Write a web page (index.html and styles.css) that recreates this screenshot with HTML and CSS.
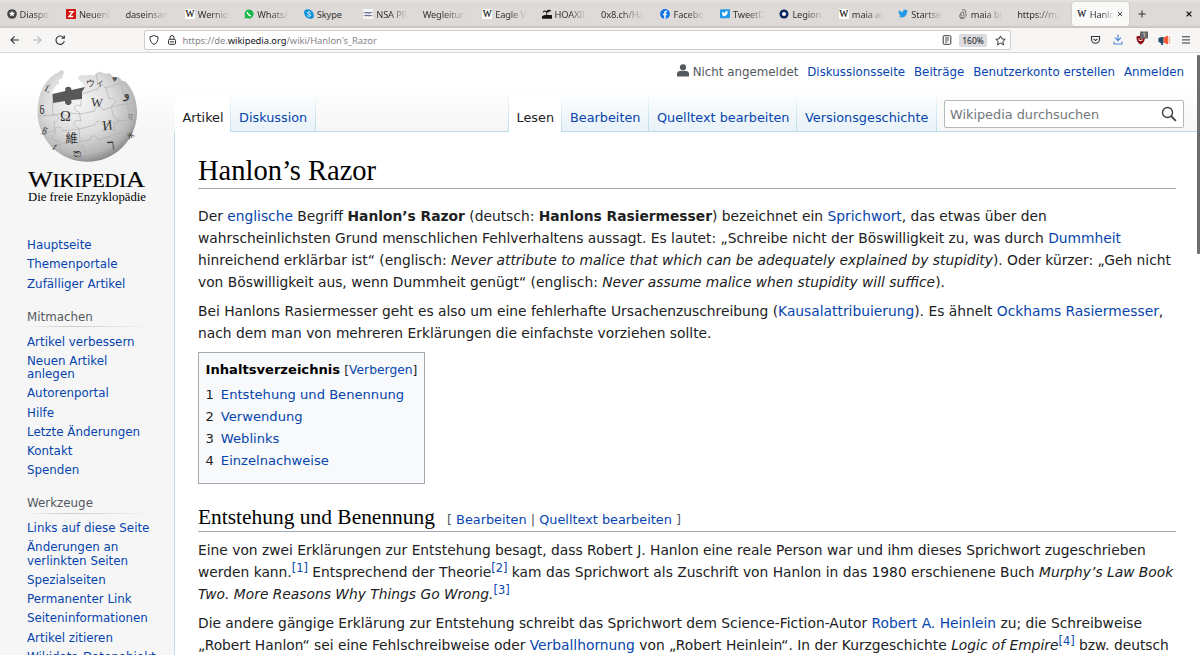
FILE: index.html
```html
<!DOCTYPE html>
<html lang="de">
<head>
<meta charset="utf-8">
<title>Hanlon’s Razor – Wikipedia</title>
<link rel="stylesheet" href="styles.css">
</head>
<body>
<div class="tabs">
  <div class="tab"><svg class="fav" viewBox="0 0 10 10"><circle cx="5" cy="5" r="4.800" fill="#444"/><path d="M5 1.500l.9 2.200 2.400.1-1.900 1.500.7 2.300L5 6.300 2.900 7.600l.7-2.300-1.900-1.500 2.400-.1z" fill="#fff"/></svg><span class="tt">Diaspor</span></div>
  <div class="tab"><svg class="fav" viewBox="0 0 10 10"><path fill="#d3170e" d="M0 0h10v10H0z"/><path d="M3 2.600h4L3 7.500h4.200" fill="none" stroke="#fff" stroke-width="1.400"/></svg><span class="tt">Neuenb</span></div>
  <div class="tab"><span class="tt">daseinsana</span></div>
  <div class="tab"><span class="fav w">W</span><span class="tt">Wernick</span></div>
  <div class="tab"><svg class="fav" viewBox="0 0 10 10"><path fill="#18b84b" d="M5 .5a4.500 4.500 0 1 1-2.100 8.400L.4 9.600l.7-2.500A4.500 4.500 0 0 1 5 .5z"/><path d="M3.300 3c.2 2 1.500 3.500 3.600 3.900" fill="none" stroke="#fff" stroke-width="1.300"/></svg><span class="tt">WhatsA</span></div>
  <div class="tab"><svg class="fav" viewBox="0 0 10 10"><circle cx="3.400" cy="3.400" r="3.200" fill="#0a93e0"/><circle cx="6.600" cy="6.600" r="3.200" fill="#0a7fd8"/><circle cx="5" cy="5" r="4.300" fill="#0a93e0"/><path d="M6.700 3.500C5.700 2.400 3.500 2.700 3.500 3.900S6.600 4.900 6.600 6.200 4.100 7.700 3.200 6.400" fill="none" stroke="#fff" stroke-width="1"/></svg><span class="tt full">Skype</span></div>
  <div class="tab"><svg class="fav" viewBox="0 0 10 10"><path fill="#f4f4f6" d="M0 0h10v10H0z"/><path d="M.5 3.500h9M.5 6.600h9" stroke="#9295ae"/><path d="M2 4.500l2-1 2 1 2-1M2 7l2-1 2 1 2-1" stroke="#444a75" stroke-width=".7" fill="none"/></svg><span class="tt">NSA PR</span></div>
  <div class="tab"><span class="tt">Wegleitung</span></div>
  <div class="tab"><span class="fav w">W</span><span class="tt">Eagle V</span></div>
  <div class="tab"><svg class="fav" viewBox="0 0 10 10"><path d="M0 7l3-1h7v3.800H0zM4.300 6.500V3.500C3 2 1.500 3 .8 4 .8 1.500 3 1 4.500 2.300 5.500.5 8.500.2 9.500 2.500 8 2 7.300 2.300 7 3.500 6.500 2.500 5.500 3 5.200 3.500v3z" fill="#161616"/></svg><span class="tt">HOAXIL</span></div>
  <div class="tab"><span class="tt">0x8.ch/Hac</span></div>
  <div class="tab"><svg class="fav" viewBox="0 0 10 10"><circle cx="5" cy="5" r="4.900" fill="#1374e8"/><path d="M4.200 9.800V6.300H2.900V4.800h1.300V3.600c0-1.300.8-2 2.800-1.700v1.300c-1 0-1.300.1-1.300.7v.9H7l-.3 1.500h-1v3.500z" fill="#fff"/></svg><span class="tt">Facebo</span></div>
  <div class="tab"><svg class="fav" viewBox="0 0 10 10"><rect y=".3" width="10" height="9" rx="1" fill="#2499ea"/><path d="M8.300 2.500l-.7.900C7.500 6.500 4 8 1.900 6.700c.7 0 1.200-.2 1.600-.5C2.400 6 1.900 5 2 2.500 3 3.500 3.800 3.800 4.900 3.900 4.800 2.300 6.300 1.700 7.200 2.600z" fill="#fff"/></svg><span class="tt">TweetD</span></div>
  <div class="tab"><svg class="fav" viewBox="0 0 10 10"><circle cx="5" cy="5" r="4.500" fill="#0b2a63"/><circle cx="5" cy="5" r="2" fill="#fff"/><path d="M2 1l2 1.500L2 4M8 9L6.500 7.500 8 6" fill="#0b2a63"/></svg><span class="tt">Legion:</span></div>
  <div class="tab"><span class="fav w">W</span><span class="tt">maia ars</span></div>
  <div class="tab"><svg class="fav" viewBox="0 0 10 10"><path d="M10 2l-1 1.100C8.900 7.500 4.500 10 .3 7.800c1.200 0 2-.3 2.800-.9-1-.1-1.600-.6-1.900-1.400h.9C1 5 .5 4.200.5 3.200l.9.300C.5 2.800.3 1.700.8.900c1.200 1.300 2.500 2 4.200 2.100C4.600.8 7.100-.2 8.300 1.200L9.600.7l-.8 1.400z" fill="#2499ea"/></svg><span class="tt">Startsei</span></div>
  <div class="tab"><svg class="fav" viewBox="0 0 10 10"><path d="M4 1.300C6-.2 8.500 1 7.500 3.500 9 6 7.500 9.300 4.500 9.300S1 7 2.300 5.500L3.500 3M4 3.300c2-1 2.500.7 1 1.500 2 .3 1.500 2.500-.5 2.200M3 7.500V5M2 9h4" fill="none" stroke="#675c57" stroke-width=".9"/></svg><span class="tt">maia blo</span></div>
  <div class="tab"><span class="tt">https://mai</span></div>
  <div class="tab active"><span class="fav w">W</span><span class="tt">Hanlo</span><svg class="x" viewBox="0 0 6 6"><path d="M.8.8l4.400 4.400M5.200.8L.8 5.200" stroke="#333" stroke-width=".9"/></svg></div>
  <svg class="plus" viewBox="0 0 8 8"><path d="M4 .5v7M.5 4h7" stroke="#333"/></svg>
  <svg class="close" viewBox="0 0 6 6"><path d="M.6.6l4.800 4.800M5.400.6L.6 5.400" stroke="#111" stroke-width="1.300"/></svg>
</div>
<div class="toolbar">
  <svg class="nav" viewBox="0 0 70 20" fill="none" stroke="#333" stroke-width="1.100"><path d="M19 10H11m3.600-3.700L11 10l3.600 3.700"/><path d="M33 10h8m-3.600-3.700L41 10l-3.600 3.700" stroke="#b8b8b8"/><path d="M63.500 7.600A4.200 4.200 0 1 0 64.300 11M64.300 5.500V8.300H61.500"/></svg>
  <div class="url">
    <svg class="i10" viewBox="0 0 10 10"><path d="M5 .6L9 1.800c.2 3.700-1 6.200-4 7.700C2 8 .8 5.500 1 1.800z" fill="none" stroke="#333"/></svg>
    <svg class="i10 lock" viewBox="0 0 10 10" fill="none" stroke="#333"><rect x="1.500" y="4.300" width="7" height="5" rx="1"/><path d="M3 4.300V2.500a2 2 0 0 1 4 0v1.800M3 6.800h4"/></svg>
    <span class="addr">https://de.<b>wikipedia.org</b>/wiki/Hanlon's_Razor</span>
    <svg class="i10 reader" viewBox="0 0 10 10" fill="none" stroke="#333"><rect x="1.200" y=".7" width="7.600" height="8.600" rx="1"/><path d="M3 3h4M3 5h4M3 7h2.500" stroke-width=".9"/></svg>
    <span class="zoom">160%</span>
    <svg class="star" viewBox="0 0 11 11"><path d="M5.500.9l1.400 3 3.300.4-2.400 2.200.7 3.300-3-1.700-3 1.700.7-3.300L.8 4.300l3.300-.4z" fill="none" stroke="#333"/></svg>
  </div>
  <svg class="ext" viewBox="0 0 102 20" fill="none"><path d="M2.500 6.500h8v2.800a4 4 0 0 1-8 0zM4.600 8.800l1.900 1.800 1.900-1.800" stroke="#333" stroke-width="1.100"/><path d="M29 4.500v6m-3-2.800l3 3 3-3M25 11.500V14h8v-2.500" stroke="#4a86d8" stroke-width="1.100"/><path d="M47.500 6.500l4.200-1 4.200 1c.2 4-1.200 6.500-4.200 8-3-1.500-4.400-4-4.200-8z" fill="#8d0710"/><path d="M50 8v2.500h3V8" stroke="#fff" stroke-width=".8"/><rect x="51" y="1.500" width="8" height="7" fill="#666"/><text x="53.400" y="7.300" class="badge">1</text><path d="M69.500 8l3-1h2v6h-2l-3-1z" fill="#1f4967"/><path d="M74.500 7.500L79 5.500v9l-4.500-2z" fill="#ef5c38"/><path d="M71.300 12l1.200 3h1.700l-.7-3" fill="#1f4967"/><path d="M79.500 8l1.500-1m-1.500 3h1.800m-1.800 2l1.500 1" stroke="#ef5c38"/><path d="M93 6.800h8M93 9.900h8M93 13h8" stroke="#333"/></svg>
</div>
<div class="page">
  <aside class="side">
    <svg class="logo" viewBox="0 0 120 152">
      <defs><radialGradient id="g" cx=".42" cy=".36" r=".66"><stop offset="0" stop-color="#f5f5f5"/><stop offset=".5" stop-color="#dedede"/><stop offset=".85" stop-color="#b5b5b5"/><stop offset="1" stop-color="#858585"/></radialGradient></defs>
      <path d="M36 6.500c-3-.5-4 2-8 3.500C17 17 10.500 31 10.500 48a49.500 49.500 0 0 0 99.500 0c0-13-5-24-12-31-2 1-4-1-5-3l-4-1c-3 1-5-2-6-4-4 2-8-1-12-1.500-1 3-5 5-8 3-3 1-5 1-7 .500-5 0-6 3-3.500 5l3 3 2 4-2 5-30 2-1-2 5-7c3 0 3-3 2-5 4-1 5-3 4-5 2-1 2-3 .5-4.500z" fill="url(#g)"/>
      <path d="M25.500 30l13-3c-2-5 6-6 6-1l13.500-3-3 5v7l-11 1c3 6-7 7-6 1l-12 2z" fill="#585858"/>
      <g fill="none" stroke="#b0b0b0" stroke-width=".7"><path d="M25 38l1 14c6-4 8 5 1 6l1 12c-5 3-3 8 3 6l4 14M54 36v6c-8-3-9 4-2 6l2 9c-9-3-9 6-2 7l1 12c-5 3-2 8 3 5l4 15M55 30l16-5c1-5 6-6 7-1l16-5M79 24l3 11c7-3 8 5 2 7l3 12c7-1 6 7 0 6l1 13M11 52l15-1 10-2c1 4 6 4 6 0l12 1 14-3c-1-5 6-7 8-1l15-5 18-2M13 70l15-3c-1-5 7-6 8 0l16-2 16-4c0-5 6-5 8 0l15-4 17-2M23 83l15-4c2-5 8-4 8 0l17-3c0-5 7-6 8 0l19-6 9-2M69 9l2 11M94 19l3 12c7-2 7 5 3 7l3 15"/></g>
      <g fill="#333" class="gl"><text x="33" y="56.500" font-size="14.500">Ω</text><text x="64" y="42.500" font-size="12.500" transform="rotate(4 69 39)">W</text><text x="75.500" y="66" font-size="14" transform="rotate(-7 80 62)">И</text><text x="38.500" y="78.500" font-size="12.500" class="cjk">維</text><text x="80" y="86" font-size="15" transform="rotate(-6 82 80)">ר</text><text x="59" y="21.500" font-size="8.500">ウィ</text><text x="85" y="18" font-size="9" fill="#555">♥</text><text x="96.500" y="34" font-size="13">و</text><text x="12.500" y="50" font-size="10">ნ</text><text x="15" y="71" font-size="9" transform="rotate(20 18 68)">წ</text><text x="18" y="28" font-size="9" transform="rotate(25 20 25)">Ĺ</text><text x="46" y="93" font-size="10">ත</text><text x="101" y="56" font-size="9" fill="#777">ए</text><text x="100" y="75" font-size="8" transform="rotate(-30 102 72)">Ж</text><text x="26" y="86" font-size="8" transform="rotate(30 28 84)">វ</text></g>
      <text x="1" y="122.500" class="wm" textLength="117" lengthAdjust="spacingAndGlyphs"><tspan class="cap">W</tspan>IKIPEDI<tspan class="cap">A</tspan></text>
      <text x="1" y="136.500" class="sub" textLength="118" lengthAdjust="spacingAndGlyphs">Die freie Enzyklopädie</text>
    </svg>
    <ul class="first"><li>Hauptseite</li><li>Themenportale</li><li>Zufälliger Artikel</li></ul>
    <h3>Mitmachen</h3>
    <ul><li>Artikel verbessern</li><li>Neuen Artikel<br>anlegen</li><li>Autorenportal</li><li>Hilfe</li><li>Letzte Änderungen</li><li>Kontakt</li><li>Spenden</li></ul>
    <h3>Werkzeuge</h3>
    <ul><li>Links auf diese Seite</li><li>Änderungen an<br>verlinkten Seiten</li><li>Spezialseiten</li><li>Permanenter Link</li><li>Seiteninformationen</li><li>Artikel zitieren</li><li>Wikidata-Datenobjekt</li></ul>
  </aside>
  <main class="main">
    <div class="head">
      <div class="personal"><svg class="user" viewBox="0 0 12 13"><circle cx="6" cy="3.300" r="3.100" fill="#54595d"/><path d="M0 12.500V10c0-2 1.500-3 3-3h6c1.500 0 3 1 3 3v2.500z" fill="#54595d"/></svg><span class="anon">Nicht angemeldet</span><a>Diskussionsseite</a><a>Beiträge</a><a>Benutzerkonto erstellen</a><a>Anmelden</a></div>
      <div class="vtabs"><span class="vt sel t1">Artikel</span><span class="vt t2">Diskussion</span><span class="gap"></span><span class="vt sel t3">Lesen</span><span class="vt t4">Bearbeiten</span><span class="vt t5">Quelltext bearbeiten</span><span class="vt t6">Versionsgeschichte</span>
        <div class="searchwrap"><div class="search"><span>Wikipedia durchsuchen</span><svg viewBox="0 0 16 16"><circle cx="6.500" cy="6.500" r="5" fill="none" stroke="#404244" stroke-width="1.400"/><path d="M10.200 10.200l4.600 4.600" stroke="#404244" stroke-width="1.900"/></svg></div></div>
      </div>
    </div>
    <article>
      <h1><span>Hanlon’s Razor</span></h1>
      <p>Der <a>englische</a> Begriff <b>Hanlon’s Razor</b> (deutsch: <b>Hanlons Rasiermesser</b>) bezeichnet ein <a>Sprichwort</a>, das etwas über den<br>wahrscheinlichsten Grund menschlichen Fehlverhaltens aussagt. Es lautet: „Schreibe nicht der Böswilligkeit zu, was durch <a>Dummheit</a><br>hinreichend erklärbar ist“ (englisch: <i>Never attribute to malice that which can be adequately explained by stupidity</i>). Oder kürzer: „Geh nicht<br>von Böswilligkeit aus, wenn Dummheit genügt“ (englisch: <i>Never assume malice when stupidity will suffice</i>).</p>
      <p>Bei Hanlons Rasiermesser geht es also um eine fehlerhafte Ursachenzuschreibung (<a>Kausalattribuierung</a>). Es ähnelt <a>Ockhams Rasiermesser</a>,<br>nach dem man von mehreren Erklärungen die einfachste vorziehen sollte.</p>
      <div class="toc"><div class="toct"><b>Inhaltsverzeichnis</b> <small>[<a>Verbergen</a>]</small></div>
        <ol><li><span>1</span><a>Entstehung und Benennung</a></li><li><span>2</span><a>Verwendung</a></li><li><span>3</span><a>Weblinks</a></li><li><span>4</span><a>Einzelnachweise</a></li></ol></div>
      <h2><span class="h2t">Entstehung und Benennung</span><span class="edit">[ <a>Bearbeiten</a> | <a>Quelltext bearbeiten</a> ]</span></h2>
      <p>Eine von zwei Erklärungen zur Entstehung besagt, dass Robert J. Hanlon eine reale Person war und ihm dieses Sprichwort zugeschrieben<br>werden kann.<sup>[1]</sup> Entsprechend der Theorie<sup>[2]</sup> kam das Sprichwort als Zuschrift von Hanlon in das 1980 erschienene Buch <i>Murphy’s Law Book</i><br><i>Two. More Reasons Why Things Go Wrong.</i><sup>[3]</sup></p>
      <p>Die andere gängige Erklärung zur Entstehung schreibt das Sprichwort dem Science-Fiction-Autor <a>Robert A. Heinlein</a> zu; die Schreibweise<br>„Robert Hanlon“ sei eine Fehlschreibweise oder <a>Verballhornung</a> von „Robert Heinlein“. In der Kurzgeschichte <i>Logic of Empire</i><sup>[4]</sup> bzw. deutsch</p>
    </article>
  </main>
  <div class="scroll"></div>
</div>
</body>
</html>
```
FILE: styles.css
```css
* { box-sizing: border-box; }
body { margin: 0; width: 1200px; height: 655px; overflow: hidden; background: #fff; font-family: "DejaVu Sans", sans-serif; color: #202122; white-space: nowrap; display: flex; flex-direction: column; }
ul, ol { list-style: none; margin: 0; padding: 0; }
svg { display: block; flex: none; }
a { color: #0645ad; text-decoration: none; }

/* browser chrome */
.tabs { height: 28px; flex: none; background: linear-gradient(#e6e3e0 0, #dedad7 3px, #dedad7 25px, #cbc7c3 27px); display: flex; align-items: center; font: 9.3px "Noto Sans", sans-serif; letter-spacing: -.15px; color: #333; }
.tab { width: 59.460px; flex: none; height: 24px; padding: 0 5px 0 6.500px; display: flex; align-items: center; gap: 3px; }
.fav { width: 10px; height: 10px; flex: none; }
.w { background: #fff; border-radius: 1px; font: 9.500px/10px "Liberation Serif", serif; text-align: center; letter-spacing: 0; color: #111; -webkit-text-stroke: .2px #111; }
.tt { flex: 1; min-width: 0; overflow: hidden; -webkit-mask-image: linear-gradient(to right, #000 40%, transparent 90%); mask-image: linear-gradient(to right, #000 40%, transparent 90%); }
.full { -webkit-mask-image: none; mask-image: none; }
.active { width: 57px; margin-left: 1.500px; background: #f9f9f8; border-radius: 3px; box-shadow: 0 0 2px #8886; padding: 0 6px 0 5px; gap: 3px; }
.x { width: 6px; height: 6px; margin-left: -3px; }
.plus { width: 8px; height: 8px; margin-left: 9px; }
.close { width: 6px; height: 6px; margin-left: auto; margin-right: 8px; }
.toolbar { height: 25px; flex: none; background: #f7f6f5; border-bottom: 1px solid #d9d7d5; display: flex; align-items: center; }
.nav { width: 70px; height: 20px; margin-right: 74px; }
.url { width: 867px; height: 20px; background: #fff; border: 1px solid #cfcdcb; border-radius: 2px; display: flex; align-items: center; padding-left: 4px; font: 9.400px "Noto Sans", sans-serif; color: #85858b; }
.i10 { width: 10px; height: 10px; }
.lock { margin-left: 7.500px; }
.addr { flex: 1; margin-left: 6px; letter-spacing: -.06px; }
.addr b { font-weight: 400; color: #15141a; }
.zoom { margin: 0 8px 0 7px; background: #dcdce0; border-radius: 2px; color: #15141a; width: 28px; height: 13px; line-height: 13px; text-align: center; font-size: 8.500px; }
.star { width: 11px; height: 11px; margin-right: 4px; }
.ext { width: 102px; height: 20px; margin-left: 77.500px; }
.badge { font: 6px "Noto Sans", sans-serif; fill: #fff; }

.page { flex: 1; display: flex; min-height: 0; position: relative; background: linear-gradient(#fff 0, #fff 30px, #f6f6f6 79px); }
.scroll { position: absolute; right: 0; top: 2px; width: 3px; height: 199px; background: #6e6e6e; border-radius: 1px; }

/* sidebar */
.side { width: 174px; flex: none; padding: 11px 0 0 27px; font-size: 11.870px; }
.logo { width: 120px; height: 152px; overflow: visible; }
.gl { font-family: "Liberation Serif", "DejaVu Sans", serif; }
.cjk { font-family: "Noto Sans CJK TC", sans-serif; }
.wm { font: 18.500px "Liberation Serif", serif; stroke: #000; stroke-width: .2px; }
.cap { font-size: 24px; }
.sub { font: 12.500px "Liberation Serif", serif; }
.side ul { color: #0645ad; line-height: 13.350px; }
.side li { padding: 2.950px 0; }
.side .first { margin-top: 20.300px; }
.side h3 { margin: 14.900px 20px 5.300px 0; height: 18.500px; line-height: 17px; font-size: 11.870px; font-weight: 400; color: #54595d; border-bottom: 1px solid; border-image: linear-gradient(to right, #c8ccd100, #c8ccd1 33%, #c8ccd100) 1; }

/* header */
.main { flex: 1; min-width: 0; }
.head { height: 79px; display: flex; flex-direction: column; justify-content: space-between; border-left: 1px solid transparent; }
.personal { display: flex; justify-content: flex-end; align-items: center; margin-top: 11px; height: 16px; padding-right: 16px; font-size: 11.850px; gap: 8.900px; }
.user { width: 12px; height: 13px; margin-right: -5px; margin-top: -4px; }
.anon { color: #54595d; }
.vtabs { height: 40px; display: flex; font-size: 12.840px; }
.vt, .gap, .searchwrap { flex: none; border-bottom: 1px solid #b9dcec; }
.vt { color: #0645ad; padding: 16px 0 0 8px; line-height: 20px; border-right: 1px solid; border-image: linear-gradient(#fff0, #b9dcec) 1; background: linear-gradient(#fff 0, #e8f2f8); }
.sel { color: #202122; border-bottom: 0; background: #fff; padding-left: 7.500px; }
.t1 { width: 56px; } .t2 { width: 84.500px; } .t3 { width: 53px; } .t4 { width: 87px; } .t5 { width: 148px; } .t6 { width: 139.500px; }
.gap { width: 193.500px; border-right: 1px solid; border-image: linear-gradient(#fff0, #b9dcec) 1; }
.searchwrap { flex: 1; display: flex; padding: 8px 16px 0 7.500px; }
.search { flex: 1; height: 28px; border: 1px solid #b4b9bf; border-radius: 2px; background: #fff; display: flex; align-items: center; justify-content: space-between; padding: 0 6px 0 5px; font-size: 12.840px; color: #72777d; }
.search svg { width: 16px; height: 16px; }

/* article */
article { background: #fff; border-left: 1px solid #bfdcec; height: 524px; padding: 20px 24px 0 23px; font-size: 13.825px; line-height: 22.130px; }
h1, h2 { font-family: "Liberation Serif", serif; font-weight: 400; color: #000; border-bottom: 1px solid #a2a9b1; margin: 0; }
h1 { height: 37px; font-size: 28.500px; line-height: 37px; margin-bottom: 16px; }
p { margin: 0 0 6.700px; }
sup { color: #0645ad; font-size: 11.400px; line-height: 1; vertical-align: 5px; }
.toc { width: 227px; height: 132px; margin-top: 7.500px; border: 1px solid #a2a9b1; background: #f8f9fa; padding: 6px 6.500px; font-size: 13.120px; }
.toct b { color: #000; }
.toct small { font-size: 12.300px; }
.toct { margin-bottom: 2.500px; }
.toc li { display: flex; gap: 7px; }
h2 { margin: 22px 0 7px; height: 26px; display: flex; align-items: baseline; font-size: 21.450px; line-height: 22px; }
.edit { font: 12.850px/20px "DejaVu Sans", sans-serif; color: #54595d; margin-left: 12px; }
```
